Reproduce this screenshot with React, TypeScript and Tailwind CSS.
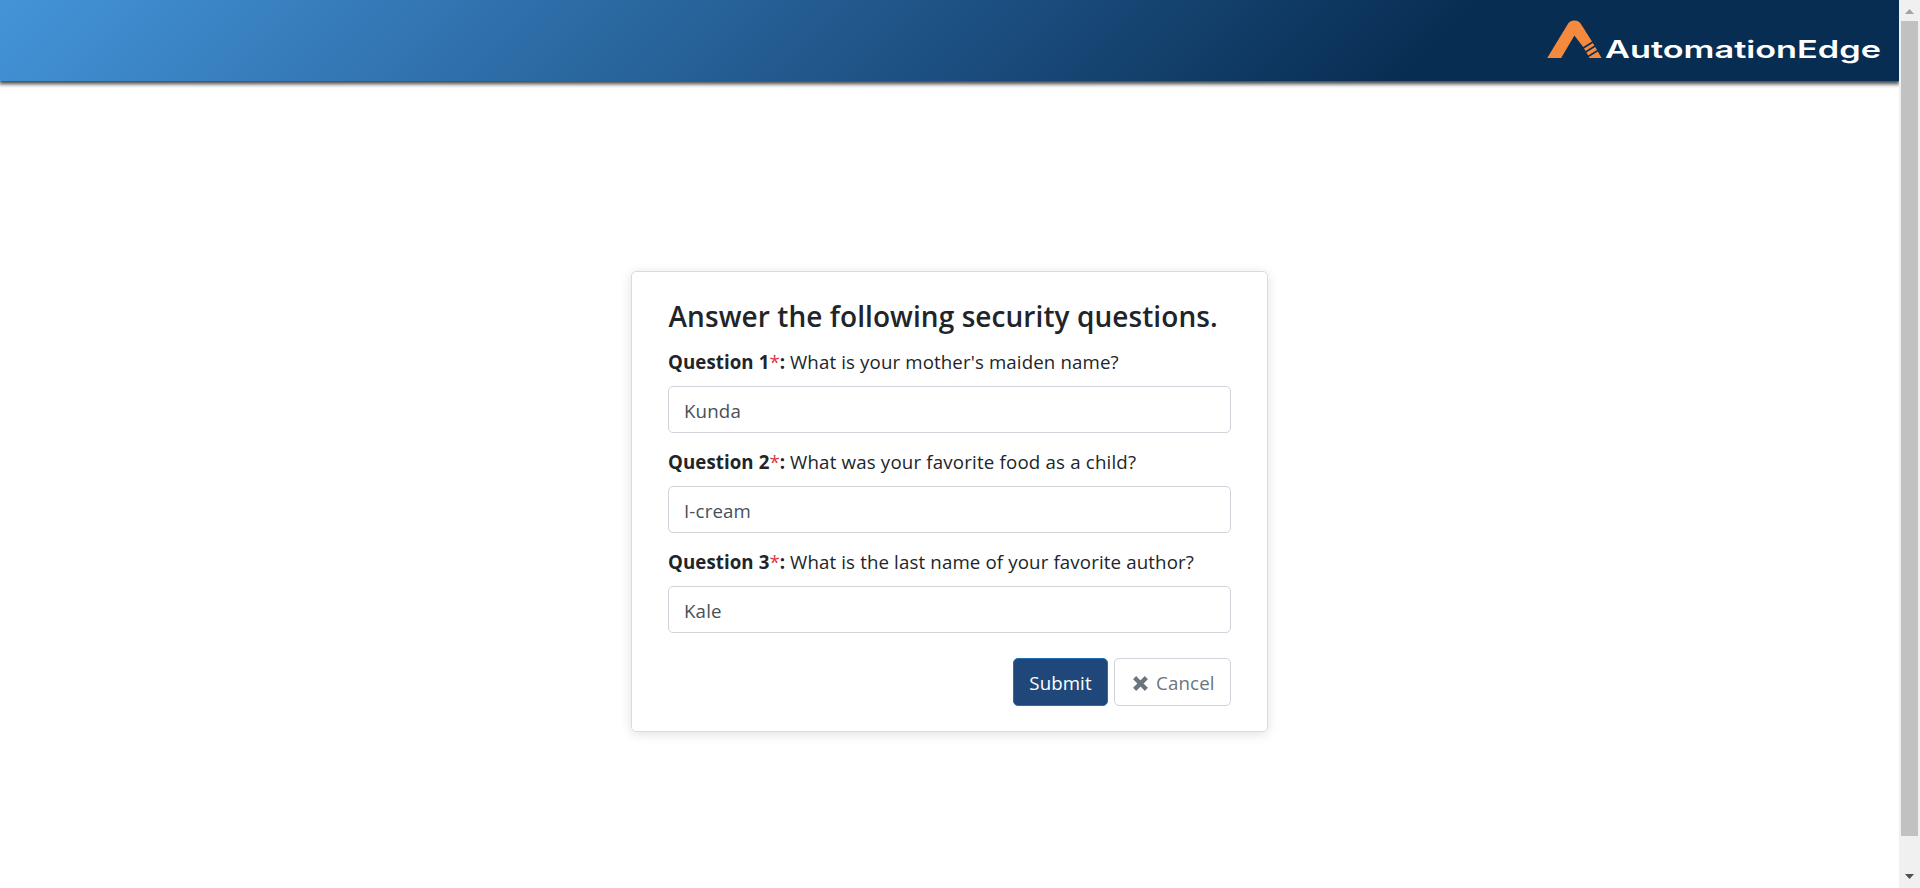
import React from "react";

type Question = { id: number; text: string; answer: string; tracking: string };

const questions: Question[] = [
  { id: 1, text: "What is your mother's maiden name?", answer: "Kunda", tracking: "tracking-[0.12px]" },
  { id: 2, text: "What was your favorite food as a child?", answer: "I-cream", tracking: "tracking-[0.18px]" },
  { id: 3, text: "What is the last name of your favorite author?", answer: "Kale", tracking: "tracking-[0.13px]" },
];

function Logo() {
  return (
    <svg width="340" height="50" viewBox="1545 15 340 50" aria-label="AutomationEdge">
      <path d="M1547.2 58 L1567.4 24.8 Q1569.8 20.6 1574.2 20.6 Q1579 20.6 1581.4 24.8 L1592 41.6 L1583.2 47 L1574.4 35.4 L1561.2 58 Z" fill="#f5893d" />
      <path d="M1584 48.5 L1592.8 43 L1594.4 45.6 L1585.6 51 Z M1586.4 52.4 L1595.2 47 L1597 50 L1588.2 55.4 Z M1588.8 57 L1597.8 51.4 L1601.6 58 L1589.4 58 Z" fill="#f5893d" />
      <text x="1605" y="57.5" textLength="276" lengthAdjust="spacingAndGlyphs" fill="#ffffff" className="font-['Inter',sans-serif] text-[24px] font-semibold">
        AutomationEdge
      </text>
    </svg>
  );
}

function Scrollbar() {
  return (
    <div className="flex h-[888px] w-[21px] shrink-0 flex-col items-center bg-[#f0f0f0]">
      <div className="flex h-[21px] items-center">
        <svg width="9" height="5" viewBox="0 0 9 5" className="mt-0.5"><path d="M0 5 L4.5 0 L9 5 Z" fill="#a3a3a3" /></svg>
      </div>
      <div className="h-[815px] w-[17px] bg-[#c1c1c1]" />
      <div className="mt-[38px]">
        <svg width="9" height="5" viewBox="0 0 9 5"><path d="M0 0 L4.5 5 L9 0 Z" fill="#505050" /></svg>
      </div>
    </div>
  );
}

export default function App() {
  return (
    <div className="flex h-[888px] w-[1920px] overflow-hidden bg-white font-['Open_Sans','Noto_Sans',sans-serif] text-[18.7px] text-[#212529]">
      <div className="flex min-w-0 flex-1 flex-col items-center overflow-hidden">
        <header className="flex h-[81px] w-full shrink-0 items-start justify-end bg-[linear-gradient(135deg,#4494d9_0%,#1b4d7e_52%,#082d52_75%)] pt-[15px] pr-[14px] shadow-[0_2px_4px_1px_rgba(0,0,0,0.75)]">
          <Logo />
        </header>
        <main className="mt-[190px] h-[461px] w-[637px] rounded-[5px] border border-[#d9dbdd] px-9 pt-[26px] shadow-[0_2px_12px_rgba(0,0,0,0.12)]">
          <h1 className="h-[37px] pl-[0.5px] text-[28px] leading-9 font-semibold tracking-[0.07px] whitespace-nowrap">Answer the following security questions.</h1>
          <form>
            {questions.map((q) => (
              <div key={q.id} className="h-[100px] pt-3">
                <label className="flex h-[30px] items-center whitespace-nowrap">
                  <span className="w-[122px] font-bold tracking-[0.07px]">
                    Question {q.id}<span className="font-normal text-[#dc3545]">*</span>:
                  </span>
                  <span className={q.tracking}>{q.text}</span>
                </label>
                <input
                  defaultValue={q.answer}
                  className="mt-[9px] block h-[47px] w-[563px] rounded-[5px] border border-[#ced4da] px-[15px] pt-0.5 tracking-[0.15px] text-[#495057] outline-none"
                />
              </div>
            ))}
            <div className="mt-[23px] flex justify-end gap-1.5">
              <button type="button" className="h-12 w-[95px] rounded-[5px] border border-[#1f6fb8] bg-[#20477a] pt-0.5 tracking-[0.1px] text-white">Submit</button>
              <button type="button" className="flex h-12 w-[117px] items-center gap-2 rounded-[5px] border border-[#ced4da] pt-0.5 pl-[18px] tracking-[0.15px] text-[#6c757d]">
                <svg width="15" height="15" viewBox="0 0 15 15"><path d="M3.2 3.2 L11.8 11.8 M11.8 3.2 L3.2 11.8" stroke="#6c757d" strokeWidth="4.4" strokeLinecap="square" /></svg>
                Cancel
              </button>
            </div>
          </form>
        </main>
      </div>
      <Scrollbar />
    </div>
  );
}
